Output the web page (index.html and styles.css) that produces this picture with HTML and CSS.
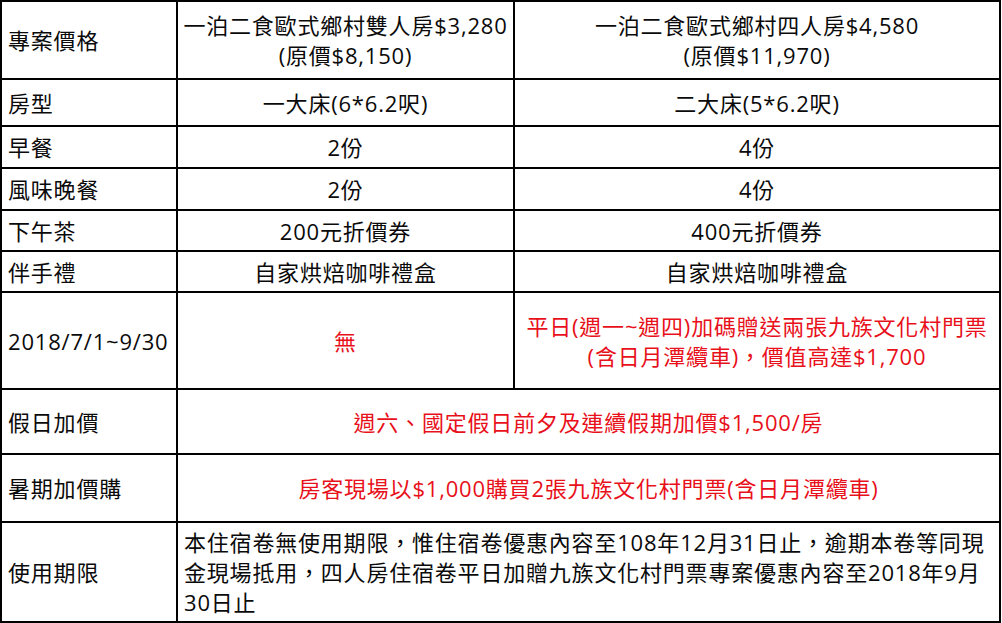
FILE: index.html
```html
<!DOCTYPE html>
<html lang="zh-Hant">
<head>
<meta charset="utf-8">
<title>專案價格</title>
<link rel="stylesheet" href="styles.css">
</head>
<body>
<table class="plan">
  <colgroup>
    <col class="c-label">
    <col class="c-two">
    <col class="c-four">
  </colgroup>
  <tbody>
    <tr class="r-price">
      <td class="label">專案價格</td>
      <td class="val">一泊二食歐式鄉村雙人房$3,280<br>(原價$8,150)</td>
      <td class="val">一泊二食歐式鄉村四人房$4,580<br>(原價$11,970)</td>
    </tr>
    <tr class="r-type">
      <td class="label">房型</td>
      <td class="val">一大床(6*6.2呎)</td>
      <td class="val">二大床(5*6.2呎)</td>
    </tr>
    <tr class="r-s1">
      <td class="label">早餐</td>
      <td class="val">2份</td>
      <td class="val">4份</td>
    </tr>
    <tr class="r-s2">
      <td class="label">風味晚餐</td>
      <td class="val">2份</td>
      <td class="val">4份</td>
    </tr>
    <tr class="r-s3">
      <td class="label">下午茶</td>
      <td class="val">200元折價券</td>
      <td class="val">400元折價券</td>
    </tr>
    <tr class="r-s4">
      <td class="label">伴手禮</td>
      <td class="val">自家烘焙咖啡禮盒</td>
      <td class="val">自家烘焙咖啡禮盒</td>
    </tr>
    <tr class="r-promo">
      <td class="label">2018/7/1~9/30</td>
      <td class="val red">無</td>
      <td class="val red">平日(週一~週四)加碼贈送兩張九族文化村門票<br>(含日月潭纜車)，價值高達$1,700</td>
    </tr>
    <tr class="r-holiday">
      <td class="label">假日加價</td>
      <td class="val red" colspan="2">週六、國定假日前夕及連續假期加價$1,500/房</td>
    </tr>
    <tr class="r-summer">
      <td class="label">暑期加價購</td>
      <td class="val red" colspan="2">房客現場以$1,000購買2張九族文化村門票(含日月潭纜車)</td>
    </tr>
    <tr class="r-limit">
      <td class="label">使用期限</td>
      <td class="note" colspan="2">本住宿卷無使用期限，惟住宿卷優惠內容至108年12月31日止，逾期本卷等同現<br>金現場抵用，四人房住宿卷平日加贈九族文化村門票專案優惠內容至2018年9月<br>30日止</td>
    </tr>
  </tbody>
</table>
</body>
</html>
```

FILE: styles.css
```css
html, body {
  margin: 0;
  padding: 0;
  background: #ffffff;
}

body {
  font-family: "Open Sans", "Noto Sans CJK TC", sans-serif;
  font-size: 22px;
  letter-spacing: 0.8px;
  color: #0a0a0a;
}

.plan {
  border-collapse: collapse;
  table-layout: fixed;
  width: 999px;
}

.c-label { width: 176px; }
.c-two { width: 337px; }
.c-four { width: 486px; }

.plan td {
  border: 2px solid #000000;
  line-height: 30px;
  padding: 0;
  vertical-align: middle;
}

.label {
  text-align: left;
  padding-left: 6px !important;
}

.val {
  text-align: center;
}

.red {
  color: #e8101a;
}

.note {
  text-align: left;
  padding-left: 6px !important;
  white-space: nowrap;
}

.r-price td { height: 76px; }
.r-type td { height: 45px; }
.r-s1 td { height: 40px; }
.r-s2 td { height: 40px; }
.r-s3 td { height: 39px; }
.r-s4 td { height: 39px; }
.r-promo td { height: 95px; }
.r-holiday td { height: 63px; }
.r-summer td { height: 66px; }
.r-limit td { height: 98px; }
```
